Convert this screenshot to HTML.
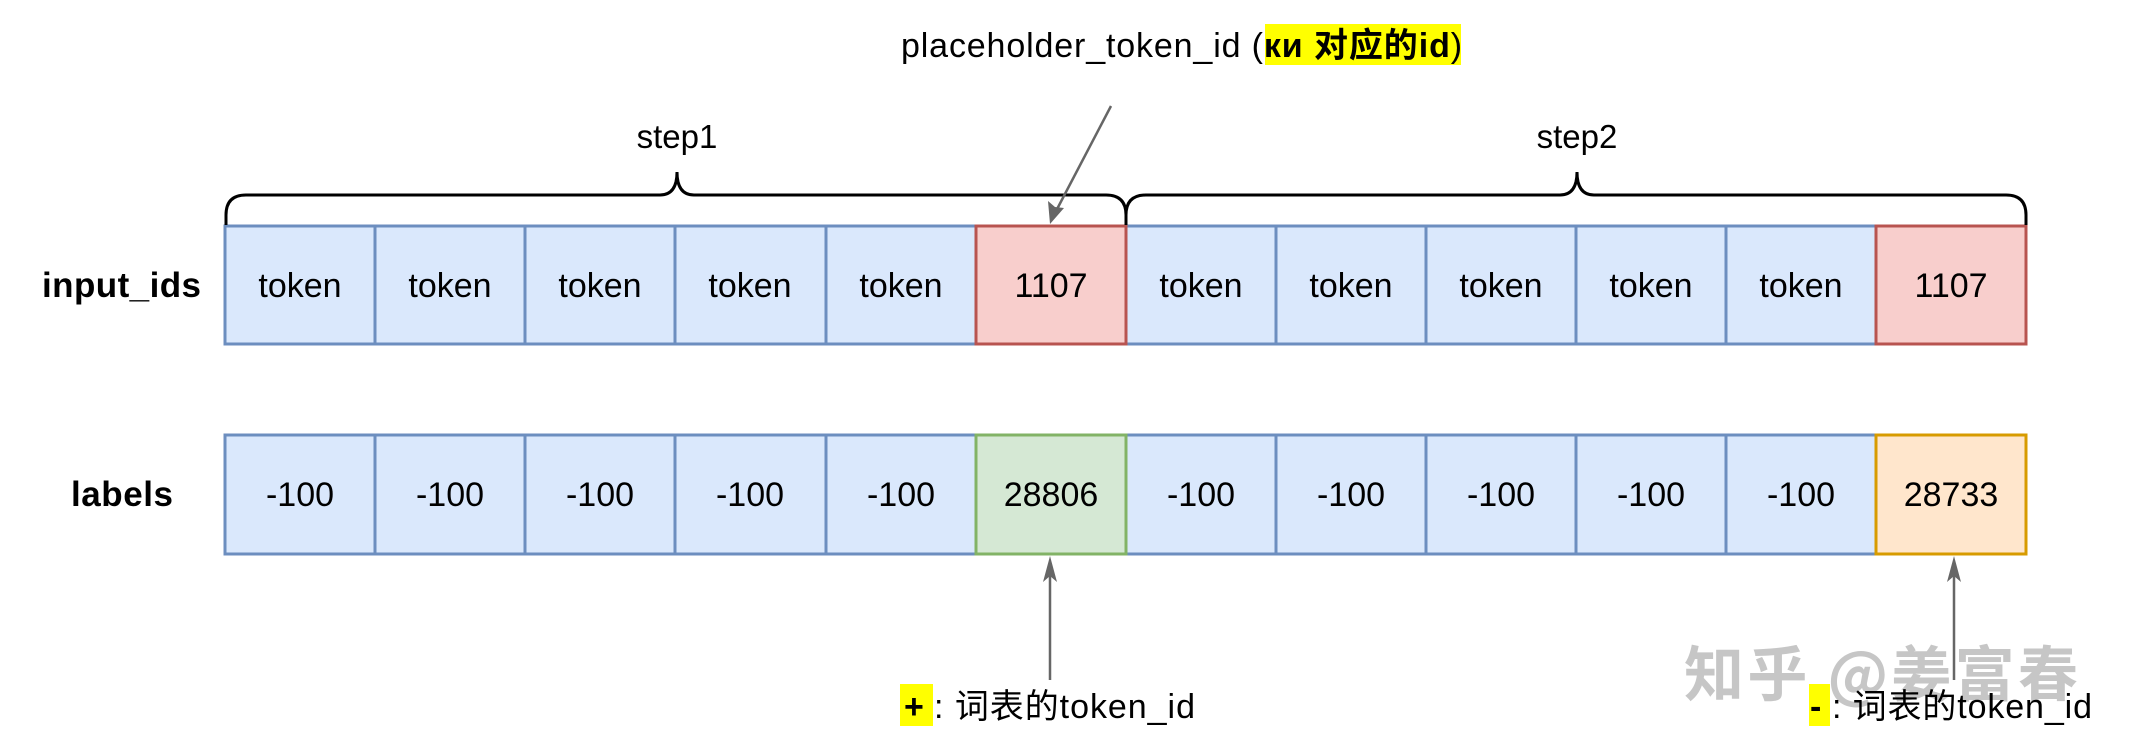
<!DOCTYPE html>
<html><head><meta charset="utf-8"><style>
html,body{margin:0;padding:0;background:#fff;}
svg{display:block;}
text{font-family:"Liberation Sans","Noto Sans CJK SC",sans-serif;}
</style></head><body>
<svg width="2135" height="755" viewBox="0 0 2135 755" xmlns="http://www.w3.org/2000/svg">
<!-- watermark -->
<text x="1684" y="696" font-size="60" fill="#bdbdbd" opacity="0.85" style="font-family:'Noto Sans CJK SC',sans-serif;font-weight:bold" textLength="394">知乎 @姜富春</text>

<g stroke-width="3">
<rect x="225" y="226" width="751" height="118" fill="#dae8fc" stroke="#6c8ebf"/>
<rect x="1126" y="226" width="750" height="118" fill="#dae8fc" stroke="#6c8ebf"/>
<rect x="976" y="226" width="150" height="118" fill="#f8cecc" stroke="#b85450"/>
<rect x="1876" y="226" width="150" height="118" fill="#f8cecc" stroke="#b85450"/>
<g stroke="#6c8ebf">
<line x1="375" y1="226" x2="375" y2="344"/><line x1="525" y1="226" x2="525" y2="344"/>
<line x1="675" y1="226" x2="675" y2="344"/><line x1="826" y1="226" x2="826" y2="344"/>
<line x1="1276" y1="226" x2="1276" y2="344"/><line x1="1426" y1="226" x2="1426" y2="344"/>
<line x1="1576" y1="226" x2="1576" y2="344"/><line x1="1726" y1="226" x2="1726" y2="344"/>
</g>
<rect x="225" y="435" width="751" height="119" fill="#dae8fc" stroke="#6c8ebf"/>
<rect x="1126" y="435" width="750" height="119" fill="#dae8fc" stroke="#6c8ebf"/>
<rect x="976" y="435" width="150" height="119" fill="#d5e8d4" stroke="#82b366"/>
<rect x="1876" y="435" width="150" height="119" fill="#ffe6cc" stroke="#d79b00"/>
<g stroke="#6c8ebf">
<line x1="375" y1="435" x2="375" y2="554"/><line x1="525" y1="435" x2="525" y2="554"/>
<line x1="675" y1="435" x2="675" y2="554"/><line x1="826" y1="435" x2="826" y2="554"/>
<line x1="1276" y1="435" x2="1276" y2="554"/><line x1="1426" y1="435" x2="1426" y2="554"/>
<line x1="1576" y1="435" x2="1576" y2="554"/><line x1="1726" y1="435" x2="1726" y2="554"/>
</g>
</g>

<g font-size="34" text-anchor="middle" fill="#000">
<text x="300" y="297">token</text><text x="450" y="297">token</text><text x="600" y="297">token</text><text x="750" y="297">token</text><text x="901" y="297">token</text><text x="1051" y="297">1107</text>
<text x="1201" y="297">token</text><text x="1351" y="297">token</text><text x="1501" y="297">token</text><text x="1651" y="297">token</text><text x="1801" y="297">token</text><text x="1951" y="297">1107</text>
<text x="300" y="506">-100</text><text x="450" y="506">-100</text><text x="600" y="506">-100</text><text x="750" y="506">-100</text><text x="901" y="506">-100</text><text x="1051" y="506">28806</text>
<text x="1201" y="506">-100</text><text x="1351" y="506">-100</text><text x="1501" y="506">-100</text><text x="1651" y="506">-100</text><text x="1801" y="506">-100</text><text x="1951" y="506">28733</text>
</g>
<text x="42" y="297" font-size="35" font-weight="bold" textLength="159">input_ids</text>
<text x="71" y="506" font-size="35" font-weight="bold" textLength="102">labels</text>

<g fill="none" stroke="#000" stroke-width="3">
<path d="M226 225 V215 Q226 195 246 195 H660 Q677 195 677 172 Q677 195 694 195 H1106 Q1126 195 1126 215 V225"/>
<path d="M1126 225 V215 Q1126 195 1146 195 H1560 Q1577 195 1577 172 Q1577 195 1594 195 H2006 Q2026 195 2026 215 V225"/>
</g>
<text x="677" y="148" font-size="33" text-anchor="middle">step1</text>
<text x="1577" y="148" font-size="33" text-anchor="middle">step2</text>

<rect x="1265" y="24" width="196" height="41" fill="#ffff00"/>
<text x="901" y="57" font-size="34"><tspan textLength="362">placeholder_token_id (</tspan><tspan font-weight="bold" textLength="186">ки 对应的id</tspan>)</text>

<g stroke="#666" stroke-width="2.5" fill="#666">
<line x1="1111" y1="106" x2="1055" y2="213"/>
<path d="M1050 224 L1048 201 L1055 207 L1064 208 Z" stroke="none"/>
<line x1="1050" y1="680" x2="1050" y2="568"/>
<path d="M1050 556 L1057 582 L1050 576 L1043 582 Z" stroke="none"/>
<line x1="1954" y1="680" x2="1954" y2="568"/>
<path d="M1954 556 L1961 582 L1954 576 L1947 582 Z" stroke="none"/>
</g>

<rect x="900" y="684" width="33" height="42" fill="#ffff00"/>
<text x="904" y="718" font-size="34" font-weight="bold">+</text>
<text x="934" y="718" font-size="34" textLength="261">: 词表的token_id</text>
<rect x="1809" y="684" width="21" height="42" fill="#ffff00"/>
<text x="1810" y="718" font-size="34" font-weight="bold">-</text>
<text x="1832" y="718" font-size="34" textLength="260">: 词表的token_id</text>
</svg>
</body></html>
